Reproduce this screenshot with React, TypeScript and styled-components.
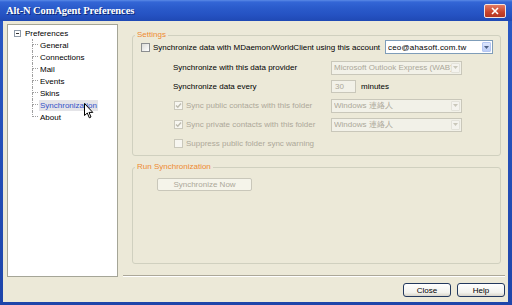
import React from 'react';
import styled, { createGlobalStyle } from 'styled-components';

const Global = createGlobalStyle`
  html, body { margin: 0; padding: 0; background: #2147AC; overflow: hidden; }
  * { box-sizing: border-box; }
  body { font-family: "Liberation Sans", Arial, sans-serif; font-size: 8px; }
`;

const Window = styled.div`
  position: relative;
  width: 512px;
  height: 305px;
  display: flex;
  flex-direction: column;
  background: linear-gradient(to bottom, #2A59C6, #1E45AA);
`;

const TitleBar = styled.div`
  height: 21px;
  flex: none;
  display: flex;
  align-items: center;
  justify-content: space-between;
  padding: 0 6px 0 6px;
  background: linear-gradient(to bottom, #5A8AE6 0px, #3366D6 2px, #2A5BCB 8px, #2552C2 15px, #1F49B4 21px);
`;

const Title = styled.span`
  font-family: "Liberation Serif", "Times New Roman", serif;
  font-weight: bold;
  font-size: 10.5px;
  color: #fff;
  text-shadow: 1px 1px 0 #0E2A78;
  letter-spacing: -0.1px;
`;

const CloseBtn = styled.div`
  width: 22px;
  height: 14px;
  border: 1px solid #F4E4E0;
  border-radius: 2px;
  background: linear-gradient(to bottom, #E37A63, #C9432A 60%, #B33622);
  display: flex;
  align-items: center;
  justify-content: center;
`;

const Client = styled.div`
  flex: 1;
  margin: 0 4px 3px 3px;
  background: #ECE9D8;
  display: flex;
  gap: 5px;
  padding: 3px 3px 5px 4px;
`;

const Tree = styled.div`
  position: relative;
  width: 111px;
  height: 253px;
  flex: none;
  background: #fff;
  border: 1px solid #A5A597;
  padding-top: 2px;
  color: #000;
`;

const RootRow = styled.div`
  height: 12px;
  display: flex;
  align-items: center;
  padding-left: 6px;
`;

const Expander = styled.span`
  width: 7px;
  height: 7px;
  border: 1px solid #8E9AA8;
  background: #fff;
  display: flex;
  align-items: center;
  justify-content: center;
  &::after {
    content: "";
    width: 3px;
    height: 1px;
    background: #333;
  }
`;

const RootLabel = styled.span`
  margin-left: 4px;
`;

const ChildList = styled.div`
  padding-left: 24px;
`;

const ChildRow = styled.div`
  height: 12px;
  display: flex;
  align-items: center;
`;

const Connector = styled.span<{ $last?: boolean }>`
  width: 6px;
  height: 12px;
  flex: none;
  display: flex;
  flex-direction: column;
`;

const ConnTop = styled.span`
  height: 6px;
  border-left: 1px dotted #A0A0A0;
  border-bottom: 1px dotted #A0A0A0;
`;

const ConnBottom = styled.span<{ $last?: boolean }>`
  height: 6px;
  border-left: 1px dotted ${p => (p.$last ? 'transparent' : '#A0A0A0')};
`;

const ChildLabel = styled.span<{ $active?: boolean }>`
  margin-left: 1px;
  padding: 1px 1px;
  line-height: 9px;
  color: ${p => (p.$active ? '#3552C8' : '#000')};
  background: ${p => (p.$active ? '#E4E4E8' : 'transparent')};
`;

const Cursor = styled.svg`
  position: absolute;
  left: 76px;
  top: 78px;
`;

const RightCol = styled.div`
  flex: 1;
  display: flex;
  flex-direction: column;
`;

const Group = styled.fieldset<{ $top: number }>`
  margin: ${p => p.$top}px 4px 0 9px;
  padding: 0;
  min-width: 0;
  border: 1px solid #D0D0BF;
  border-radius: 3px;
`;

const Legend = styled.legend`
  margin-left: 2px;
  padding: 0 2px;
  font-size: 8px;
  line-height: 10px;
  color: #EE8A32;
`;

const AccountRow = styled.div`
  height: 14px;
  display: flex;
  align-items: center;
  padding: 0 7px 0 8px;
`;

const Check = styled.span<{ $disabled?: boolean }>`
  width: 9px;
  height: 9px;
  flex: none;
  border: 1px solid ${p => (p.$disabled ? '#CAC8BB' : '#8C8E90')};
  background: ${p => (p.$disabled ? '#F7F6F0' : 'linear-gradient(135deg, #DCDCD7, #FFFFFF)')};
  display: flex;
  align-items: center;
  justify-content: center;
`;

const CheckText = styled.span<{ $disabled?: boolean }>`
  margin-left: 3px;
  color: ${p => (p.$disabled ? '#ACA899' : '#000')};
  white-space: nowrap;
`;

const Combo = styled.div`
  margin-left: auto;
  width: 108px;
  height: 14px;
  border: 1px solid #7F9DB9;
  background: #fff;
  display: flex;
  align-items: center;
  padding: 1px 1px 1px 2px;
`;

const ComboText = styled.span<{ $disabled?: boolean }>`
  flex: 1;
  overflow: hidden;
  white-space: nowrap;
  color: ${p => (p.$disabled ? '#ACA899' : '#000')};
  letter-spacing: ${p => (p.$disabled ? '0' : '0.2px')};
`;

const DropBtn = styled.span<{ $disabled?: boolean }>`
  width: 9px;
  height: 10px;
  flex: none;
  border: 1px solid ${p => (p.$disabled ? '#E3E2DA' : '#B4C6F2')};
  border-radius: 1px;
  background: ${p => (p.$disabled ? '#F4F3EE' : 'linear-gradient(to bottom, #DCE6FD, #BCCDF6)')};
  display: flex;
  align-items: center;
  justify-content: center;
`;

const FieldGrid = styled.div`
  margin-top: 6px;
  padding: 0 0 4px 40px;
  display: grid;
  grid-template-columns: 158px 131px;
  grid-auto-rows: 15px;
  row-gap: 4px;
  align-items: center;
`;

const Label = styled.span`
  color: #000;
  white-space: nowrap;
`;

const CheckLine = styled.div`
  display: flex;
  align-items: center;
  padding-left: 1px;
`;

const DisabledSelect = styled.div`
  height: 14px;
  border: 1px solid #C9C7BA;
  background: #F2F1E8;
  display: flex;
  align-items: center;
  padding: 1px 1px 1px 2px;
`;

const MinutesWrap = styled.div`
  display: flex;
  align-items: center;
`;

const NumBox = styled.div`
  width: 25px;
  height: 13px;
  border: 1px solid #C9C7BA;
  background: #F2F1E8;
  color: #ACA899;
  display: flex;
  align-items: center;
  padding-left: 3px;
`;

const Unit = styled.span`
  margin-left: 5px;
  color: #000;
`;

const RunBody = styled.div`
  height: 91px;
  padding: 6px 0 0 24px;
`;

const FlatButton = styled.div`
  width: 95px;
  height: 13px;
  border: 1px solid #C9C7BA;
  border-radius: 2px;
  background: #F5F4EA;
  color: #ACA899;
  display: flex;
  align-items: center;
  justify-content: center;
`;

const Separator = styled.div`
  margin-top: auto;
  height: 2px;
  border-top: 1px solid #ACA899;
  border-bottom: 1px solid #FFFFFF;
`;

const ButtonRow = styled.div`
  margin-top: 6px;
  display: flex;
  justify-content: flex-end;
  gap: 6px;
`;

const PushButton = styled.div`
  width: 48px;
  height: 14px;
  border: 1px solid #23395E;
  border-radius: 3px;
  background: linear-gradient(to bottom, #FFFFFF, #F3F3EE 70%, #D9D5CA);
  color: #000;
  display: flex;
  align-items: center;
  justify-content: center;
`;

const Arrow = ({ color }: { color: string }) => (
  <svg width="5" height="3" viewBox="0 0 5 3">
    <polygon points="0,0 5,0 2.5,3" fill={color} />
  </svg>
);

const Tick = ({ color }: { color: string }) => (
  <svg width="7" height="7" viewBox="0 0 7 7">
    <polyline points="1,3.5 2.8,5.3 6,1.5" fill="none" stroke={color} strokeWidth="1.4" />
  </svg>
);

const children = ['General', 'Connections', 'Mail', 'Events', 'Skins', 'Synchronization', 'About'];

export default function App() {
  return (
    <>
      <Global />
      <Window>
        <TitleBar>
          <Title>Alt-N ComAgent Preferences</Title>
          <CloseBtn>
            <svg width="8" height="8" viewBox="0 0 8 8">
              <path d="M1 1 L7 7 M7 1 L1 7" stroke="#fff" strokeWidth="1.6" />
            </svg>
          </CloseBtn>
        </TitleBar>
        <Client>
          <Tree>
            <RootRow>
              <Expander />
              <RootLabel>Preferences</RootLabel>
            </RootRow>
            <ChildList>
              {children.map((c, i) => (
                <ChildRow key={c}>
                  <Connector>
                    <ConnTop />
                    <ConnBottom $last={i === children.length - 1} />
                  </Connector>
                  <ChildLabel $active={c === 'Synchronization'}>{c}</ChildLabel>
                </ChildRow>
              ))}
            </ChildList>
            <Cursor width="10" height="16" viewBox="0 0 10 16">
              <polygon
                points="0.5,0.5 0.5,12.5 3.3,10 5.3,14.8 7,14 5,9.4 8.8,9.4"
                fill="#fff"
                stroke="#000"
                strokeWidth="1"
              />
            </Cursor>
          </Tree>
          <RightCol>
            <Group $top={6}>
              <Legend>Settings</Legend>
              <AccountRow>
                <Check />
                <CheckText>Synchronize data with MDaemon/WorldClient using this account</CheckText>
                <Combo>
                  <ComboText>ceo@ahasoft.com.tw</ComboText>
                  <DropBtn>
                    <Arrow color="#4D6185" />
                  </DropBtn>
                </Combo>
              </AccountRow>
              <FieldGrid>
                <Label>Synchronize with this data provider</Label>
                <DisabledSelect>
                  <ComboText $disabled>Microsoft Outlook Express (WAB)</ComboText>
                  <DropBtn $disabled>
                    <Arrow color="#C9C7BA" />
                  </DropBtn>
                </DisabledSelect>
                <Label>Synchronize data every</Label>
                <MinutesWrap>
                  <NumBox>30</NumBox>
                  <Unit>minutes</Unit>
                </MinutesWrap>
                <CheckLine>
                  <Check $disabled>
                    <Tick color="#BDBBAE" />
                  </Check>
                  <CheckText $disabled>Sync public contacts with this folder</CheckText>
                </CheckLine>
                <DisabledSelect>
                  <ComboText $disabled>Windows 連絡人</ComboText>
                  <DropBtn $disabled>
                    <Arrow color="#C9C7BA" />
                  </DropBtn>
                </DisabledSelect>
                <CheckLine>
                  <Check $disabled>
                    <Tick color="#BDBBAE" />
                  </Check>
                  <CheckText $disabled>Sync private contacts with this folder</CheckText>
                </CheckLine>
                <DisabledSelect>
                  <ComboText $disabled>Windows 連絡人</ComboText>
                  <DropBtn $disabled>
                    <Arrow color="#C9C7BA" />
                  </DropBtn>
                </DisabledSelect>
                <CheckLine>
                  <Check $disabled />
                  <CheckText $disabled>Suppress public folder sync warning</CheckText>
                </CheckLine>
              </FieldGrid>
            </Group>
            <Group $top={6}>
              <Legend>Run Synchronization</Legend>
              <RunBody>
                <FlatButton>Synchronize Now</FlatButton>
              </RunBody>
            </Group>
            <Separator />
            <ButtonRow>
              <PushButton>Close</PushButton>
              <PushButton>Help</PushButton>
            </ButtonRow>
          </RightCol>
        </Client>
      </Window>
    </>
  );
}
